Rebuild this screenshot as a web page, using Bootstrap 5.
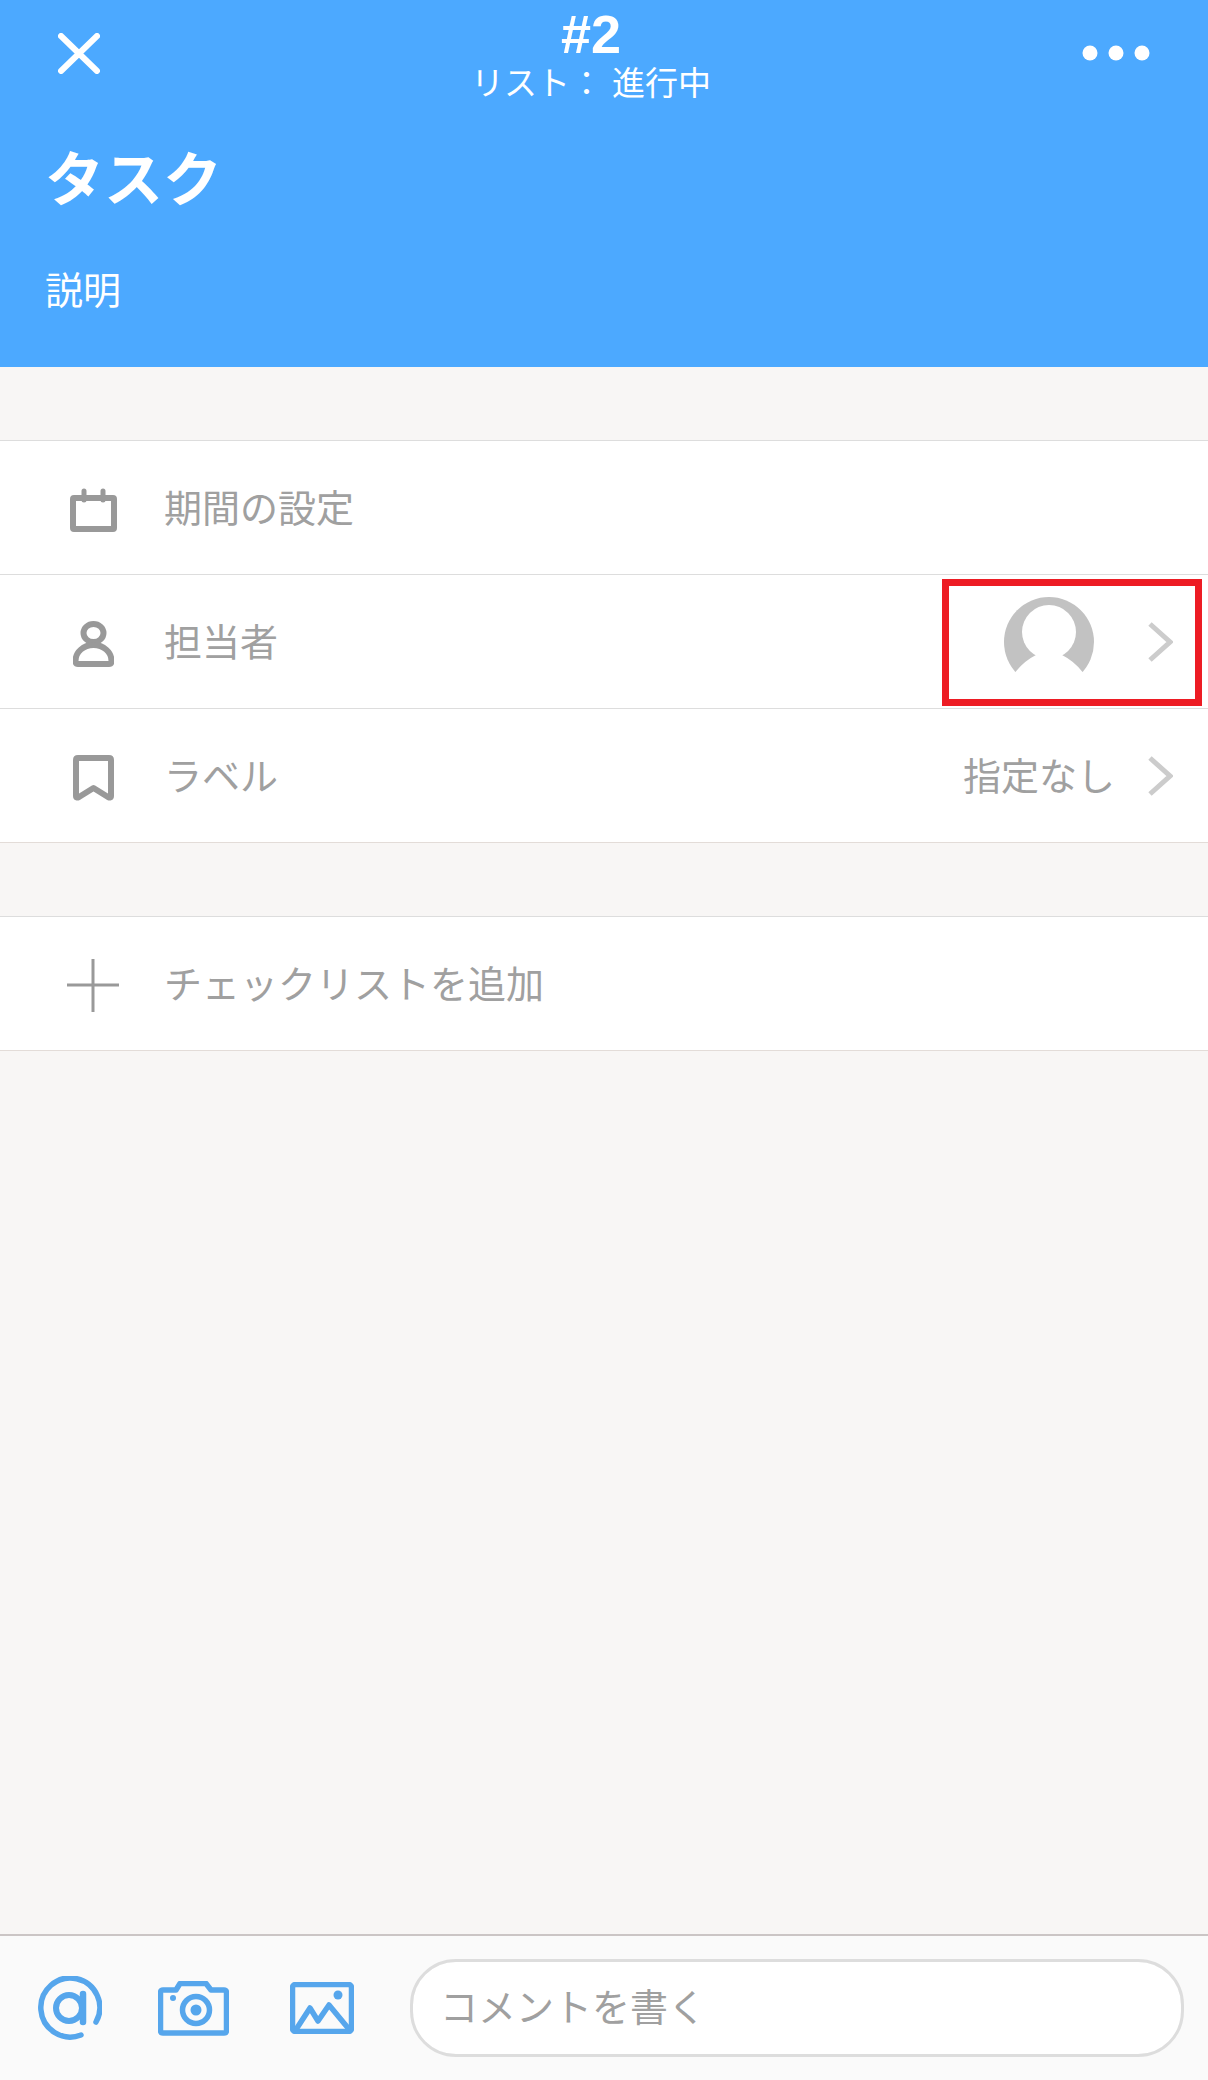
<!doctype html>
<html lang="ja">

<head>
    <meta charset="utf-8">
    <meta name="viewport" content="width=device-width, initial-scale=1">
    <link href="https://cdn.jsdelivr.net/npm/bootstrap@5.3.3/dist/css/bootstrap.min.css" rel="stylesheet">
    <title>タスク</title>
    <style>
        body {
            background: #f8f6f5;
            font-family: "Liberation Sans", "Noto Sans CJK JP", sans-serif;
            color: #a0a0a0;
        }

        .task-head {
            height: 367px;
            background: #4ca9ff;
            color: #fff;
        }

        .head-bar {
            padding: 0 58px;
            height: 104px;
        }

        .head-close {
            margin-top: 33px;
        }

        .head-dots {
            margin-top: 45px;
        }

        .head-num {
            font-size: 54px;
            font-weight: 700;
            line-height: 1;
            margin-top: 7px;
        }

        .head-list {
            font-size: 33px;
            line-height: 1;
            margin-top: 6px;
        }

        .head-title {
            font-size: 59px;
            font-weight: 700;
            line-height: 1;
            margin: 48px 0 0 45px;
        }

        .head-desc {
            font-size: 38px;
            line-height: 1;
            margin: 61px 0 0 45px;
        }

        .task-group {
            border-radius: 0;
            border-top: 1px solid #ddd;
            border-bottom: 1px solid #e3dcd8;
            margin-top: 73px;
        }

        .task-group .list-group-item {
            height: 134px;
            padding: 0 35px 0 67px;
            border-color: #ddd;
            color: #a0a0a0;
            font-size: 38px;
        }

        .task-group .list-group-item:last-child {
            height: 133px;
        }

        .row-icon {
            width: 52px;
            margin-right: 45px;
            flex-shrink: 0;
            text-align: center;
        }

        .row-text {
            padding-top: 3px;
        }

        .row-chevron {
            margin-left: 33px;
        }

        .avatar-chevron {
            margin-left: 54px;
        }

        .pick-box {
            position: absolute;
            left: 942px;
            top: 4px;
            width: 260px;
            height: 127px;
            border: 7px solid #ed1c24;
        }

        .task-foot {
            height: 146px;
            background: #fafafa;
            border-top: 2px solid #cbc5c5;
            padding: 0 24px 0 38px;
            gap: 56px;
        }

        .foot-image {
            margin-left: 5px;
        }

        .foot-input.form-control {
            height: 98px;
            border: 3px solid #ddd;
            border-radius: 46px;
            padding: 0 27px;
            font-size: 38px;
        }

        .foot-input.form-control::placeholder {
            color: #a0a0a0;
        }
    </style>
</head>

<body class="d-flex flex-column min-vh-100">
    <header class="task-head">
        <div class="head-bar d-flex justify-content-between align-items-start">
            <svg class="head-close" width="42" height="41" viewBox="0 0 42 41" fill="none" stroke="#fff" stroke-width="6" stroke-linecap="round">
                <path d="M3 3l36 35M39 3L3 38" />
            </svg>
            <div class="text-center">
                <div class="head-num">#2</div>
                <div class="head-list">リスト： 進行中</div>
            </div>
            <svg class="head-dots" width="68" height="16" viewBox="0 0 68 16" fill="#fff">
                <circle cx="8" cy="8" r="7.500" />
                <circle cx="34" cy="8" r="7.500" />
                <circle cx="60" cy="8" r="7.500" />
            </svg>
        </div>
        <div class="head-title">タスク</div>
        <div class="head-desc">説明</div>
    </header>

    <div class="list-group list-group-flush task-group">
        <div class="list-group-item d-flex align-items-center">
            <span class="row-icon">
                <svg width="47" height="44" viewBox="0 0 47 44" fill="none" stroke="#999" stroke-width="6" stroke-linecap="round" stroke-linejoin="round">
                    <rect x="3" y="10" width="41" height="31" rx="1" />
                    <path d="M14 3v9M33 3v9" stroke-width="5" />
                </svg>
            </span>
            <span class="row-text">期間の設定</span>
        </div>
        <div class="list-group-item d-flex align-items-center position-relative">
            <span class="row-icon">
                <svg width="41" height="46" viewBox="0 0 41 46" fill="none" stroke="#999" stroke-width="6" stroke-linejoin="round">
                    <ellipse cx="20.500" cy="12" rx="10" ry="9" />
                    <path d="M5 43h31q2.500 0 2.500-3c0-9-8-16-18-16s-18 7-18 16q0 3 2.500 3z" />
                </svg>
            </span>
            <span class="row-text">担当者</span>
            <svg class="ms-auto" width="90" height="90" viewBox="0 0 90 90">
                <circle cx="45" cy="45" r="45" fill="#c2c2c2" />
                <circle cx="45" cy="35" r="27" fill="#fff" />
                <path d="M0 90V75H11.500Q20 64 32 58H58Q70 64 78.500 75H90V90z" fill="#fff" />
            </svg>
            <svg class="avatar-chevron" width="25" height="40" viewBox="0 0 25 40" fill="none" stroke="#ccc" stroke-width="5">
                <path d="M2 2l20 18L2 38" />
            </svg>
            <div class="pick-box"></div>
        </div>
        <div class="list-group-item d-flex align-items-center">
            <span class="row-icon">
                <svg width="41" height="46" viewBox="0 0 41 46" fill="none" stroke="#999" stroke-width="6" stroke-linejoin="round">
                    <path d="M3 5q0-2 2-2H36q2 0 2 2V41q0 2.500-3 1L20.500 33 6 42q-3 1.500-3-1z" />
                </svg>
            </span>
            <span class="row-text">ラベル</span>
            <span class="row-text ms-auto">指定なし</span>
            <svg class="row-chevron" width="25" height="40" viewBox="0 0 25 40" fill="none" stroke="#ccc" stroke-width="5">
                <path d="M2 2l20 18L2 38" />
            </svg>
        </div>
    </div>

    <div class="list-group list-group-flush task-group">
        <div class="list-group-item d-flex align-items-center">
            <span class="row-icon">
                <svg width="52" height="53" viewBox="0 0 52 53" fill="none" stroke="#999" stroke-width="3">
                    <path d="M26 0v53M0 26h52" />
                </svg>
            </span>
            <span class="row-text">チェックリストを追加</span>
        </div>
    </div>

    <footer class="task-foot d-flex align-items-center mt-auto">
        <svg class="flex-shrink-0" width="64" height="64" viewBox="0 0 64 64" fill="none" stroke="#56a6ec" stroke-width="5.500" stroke-linecap="round">
            <path d="M43 59A29.500 29.500 0 1 1 58 46" />
            <circle cx="31" cy="32" r="13" stroke-width="6" />
            <path d="M45 18v28" stroke-width="6.500" />
        </svg>
        <svg class="flex-shrink-0" width="71" height="55" viewBox="0 0 71 55" fill="none" stroke="#56a6ec" stroke-width="5.500" stroke-linejoin="round">
            <path d="M5 9h13l4-6.500h26l5 6.500h13q2.500 0 2.500 3v37q0 3-2.500 3H5q-2.500 0-2.500-3V12q0-3 2.500-3z" />
            <circle cx="38" cy="29" r="13.500" />
            <circle cx="38" cy="29" r="5.500" fill="#56a6ec" stroke="none" />
            <circle cx="15" cy="17" r="3" fill="#56a6ec" stroke="none" />
        </svg>
        <svg class="foot-image flex-shrink-0" width="64" height="52" viewBox="0 0 64 52" fill="none" stroke="#56a6ec" stroke-width="5.500" stroke-linejoin="round" stroke-linecap="round">
            <rect x="2.500" y="2.500" width="59" height="47" rx="3" />
            <path d="M7 46l13-20 8 13 11-16 19 23" />
            <circle cx="48" cy="13" r="4.500" fill="#56a6ec" stroke="none" />
        </svg>
        <input class="form-control foot-input flex-grow-1" type="text" placeholder="コメントを書く">
    </footer>
</body>

</html>
